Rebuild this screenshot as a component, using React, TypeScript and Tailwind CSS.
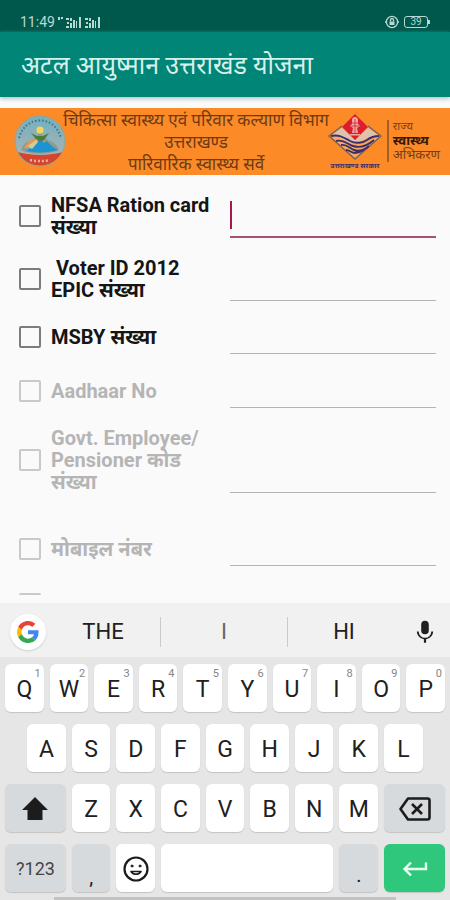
import type { ReactNode } from 'react';

const fontStack =
  "font-[Roboto,'Noto_Sans','Noto_Sans_Devanagari','Lohit_Devanagari',sans-serif]";

type Field = {
  id: string;
  label: string;
  disabled?: boolean;
  focused?: boolean;
  spacing?: string;
};

const fields: Field[] = [
  { id: 'nfsa', label: 'NFSA Ration card\nसंख्या', focused: true },
  { id: 'epic', label: ' Voter ID 2012\nEPIC संख्या' },
  { id: 'msby', label: 'MSBY संख्या' },
  { id: 'aadhaar', label: 'Aadhaar No', disabled: true, spacing: 'mt-px' },
  { id: 'govt', label: 'Govt. Employee/\nPensioner कोड\nसंख्या', disabled: true },
  { id: 'mobile', label: 'मोबाइल नंबर', disabled: true, spacing: 'mt-5' },
];

function StatusBar() {
  return (
    <div className="flex h-8 shrink-0 items-end justify-between bg-[#00584c] px-5 pb-[3px] text-[#b9d8d3]">
      <div className="flex items-center gap-[3px]">
        <span className="text-[14px] leading-[14px]">11:49</span>
        <svg width="44" height="13" viewBox="0 0 44 13" fill="currentColor" aria-hidden="true">
          <path d="M0 1h2v3H0zM3 1h2v2H3zM8 2h3v2H8zM9 6h2v2H9zM8 10h3v2H8zM12 2h2v3h-2zM12 7h2v5h-2zM15 4h2v8h-2zM18 5h1v7h-1zM21 1h2v11h-2z" />
          <path d="M27 2h3v2h-3zM28 6h2v2h-2zM27 10h3v2h-3zM31 2h2v3h-2zM31 7h2v5h-2zM34 4h2v8h-2zM37 5h1v7h-1zM40 1h2v11h-2z" />
        </svg>
      </div>
      <div className="flex items-center gap-[5px]">
        <svg width="14" height="14" viewBox="0 0 14 14" fill="none" stroke="currentColor" strokeWidth="1.3" aria-hidden="true">
          <circle cx="7" cy="7" r="5.6" />
          <path d="M5.5 6.5V5a1.5 1.5 0 0 1 3 0v1.5" />
          <path d="M4.5 6.5h5V10h-5z" fill="currentColor" stroke="none" />
          <path d="M0 7h1M13 7h1" />
        </svg>
        <div className="flex items-center">
          <span className="flex h-3 w-6 items-center justify-center rounded-[3px] border border-current text-[10px] leading-none">
            39
          </span>
          <span className="h-1 w-[2px] bg-current" />
        </div>
      </div>
    </div>
  );
}

function HealthEmblem() {
  return (
    <svg className="shrink-0" width="52" height="52" viewBox="0 0 52 52" aria-hidden="true">
      <defs>
        <clipPath id="seal">
          <circle cx="26" cy="26" r="25" />
        </clipPath>
        <linearGradient id="sky" x1="0" y1="0" x2="0" y2="1">
          <stop offset="0" stopColor="#6fb0c4" />
          <stop offset="1" stopColor="#b9b3ac" />
        </linearGradient>
      </defs>
      <g clipPath="url(#seal)">
        <rect width="52" height="52" fill="url(#sky)" />
        <path d="M0 36c9 3 17 4 26 4s18-1 26-4v16H0z" fill="#d5442c" />
      </g>
      <path d="M7 35c2-6 6-9 10-9l9-8 9 8c4 0 8 4 10 9-11 5-27 5-38 0z" fill="#8d9c92" />
      <path d="M10 33c4-7 9-10 16-10l-6 10z" fill="#e39a52" />
      <path d="M12 36c6-3 10-7 14-13l4 5 3-2c3 4 7 7 11 9-10 3-22 3-32 1z" fill="#1c94d2" />
      <path d="m17 18 6 3h6l6-3-5 7-4 1-4-2z" fill="#4f7a38" />
      <path d="m14 31 8-6 2 2-6 7z" fill="#d8c99a" />
      <circle cx="26" cy="15" r="3.6" fill="#f0d85a" />
      <path d="M5 23C8 12 16 5.500 26 5.500S44 12 47 23" fill="none" stroke="#4b6e7c" strokeWidth="2" strokeDasharray="1.500 2" />
      <path d="M16 45c7 1.500 13 1.500 20 0" fill="none" stroke="#f5b29a" strokeWidth="2.500" strokeDasharray="2 2" />
      <circle cx="26" cy="26" r="25" fill="none" stroke="#8ba7a0" strokeWidth="1" />
    </svg>
  );
}

function StateEmblem() {
  return (
    <svg width="54" height="47" viewBox="0 0 54 47" aria-hidden="true">
      <path d="M14 13 1 22l26 23 26-23-13-9z" fill="#f9a65e" />
      <path d="M14 12 1 22l26 23 26-23-13-10" fill="none" stroke="#75605f" strokeWidth="1.400" />
      <path d="m3 22 11-8 13 12 13-12 11 8-10 1-8 4-12 2-10-6z" fill="#dfc2ae" />
      <path d="M3 22c9-2 13 2 19 5s13 2 17-1 8-4 12-4M8 27c8-2 11 3 17 5s14 0 21-6M13 31c6-1 8 3 13 5s10 0 15-4M18 36c4 0 5 3 9 3s6-1 9-3" fill="none" stroke="#3c2e68" strokeWidth="1.900" />
      <path d="m27 0 13 13-13 13-13-13z" fill="#d91f2d" />
      <path d="M24 6c0-4 6-4 6 0v4l2 2-3 2 1 5h-6l1-5-3-2 2-2zM22 20h10v1.500H22z" fill="#f3a9a4" />
      <path d="M27 5v15M24 9h6M23 12h8" fill="none" stroke="#d91f2d" strokeWidth=".8" />
    </svg>
  );
}

function Banner() {
  return (
    <section className="relative mt-[11px] h-[67px] shrink-0 bg-[#fc8a27]">
      <h2 className="mr-[58px] pt-px text-center text-[17px] leading-[22px] font-normal whitespace-nowrap text-[#6d3a14]">
        चिकित्सा स्वास्थ्य एवं परिवार कल्याण विभाग
        <br />
        उत्तराखण्ड
        <br />
        पारिवारिक स्वास्थ्य सर्वे
      </h2>
      <div className="absolute top-[7px] left-[14px]">
        <HealthEmblem />
      </div>
      <div className="absolute top-[6px] right-[10px] flex gap-[5px]">
        <div className="flex flex-col items-center">
          <StateEmblem />
          <span className="text-[7px] leading-[11px] font-bold whitespace-nowrap text-[#3e2f6c]">
            उत्तराखण्ड सरकार
          </span>
        </div>
        <div className="flex h-[53px] flex-col justify-center whitespace-nowrap text-[#74401c]">
          <div className="flex flex-col border-l-2 border-[#a0612a] pl-1">
            <span className="text-[11px] leading-[14px]">राज्य</span>
            <span className="text-[13px] leading-[14px] font-bold text-[#32190b]">स्वास्थ्य</span>
            <span className="text-[13px] leading-[14px]">अभिकरण</span>
          </div>
        </div>
      </div>
    </section>
  );
}

function FieldRow({ field }: { field: Field }) {
  const box = field.disabled ? 'border-[#c9c9c9]' : 'border-[#7c7c7c]';
  const text = field.disabled ? 'text-[#b5b5b5]' : 'text-[#151515]';
  const line = field.focused
    ? 'border-b-2 border-[#a85070]'
    : 'border-b border-[#b4b4b4]';
  return (
    <div className={`grid min-h-[34px] shrink-0 grid-cols-[211fr_206fr] ${field.spacing ?? ''}`}>
      <div className="flex items-center gap-[10px]">
        <input
          type="checkbox"
          id={field.id}
          disabled={field.disabled}
          className={`size-[22px] shrink-0 appearance-none rounded-[2px] border-2 ${box}`}
        />
        <label
          htmlFor={field.id}
          className={`text-[20px] leading-[22px] font-bold whitespace-pre ${text}`}
        >
          {field.label}
        </label>
      </div>
      <div className="relative flex">
        <input
          type="text"
          aria-label={field.label}
          disabled={field.disabled}
          className={`w-full min-w-0 bg-transparent outline-none ${line}`}
        />
        {field.focused && (
          <span className="absolute top-[7px] left-0 h-[28px] w-[2px] bg-[#a01c50]" />
        )}
      </div>
    </div>
  );
}

function Key({
  children,
  hint,
  label,
  span = 'col-span-2',
  tone = 'bg-white',
}: {
  children?: ReactNode;
  hint?: string;
  label?: string;
  span?: string;
  tone?: string;
}) {
  return (
    <button
      type="button"
      aria-label={label}
      className={`relative mx-[3px] flex h-12 items-center justify-center rounded-[6px] pt-[2px] text-[23px] leading-none text-[#202020] shadow-[0_1px_1px_#c3c3c3] ${span} ${tone}`}
    >
      {children}
      {hint && (
        <span className="absolute top-1 right-[3px] text-[11px] leading-none text-[#858585]">
          {hint}
        </span>
      )}
    </button>
  );
}

function GoogleLogo() {
  return (
    <svg width="22" height="22" viewBox="0 0 48 48" aria-hidden="true">
      <path fill="#EA4335" d="M24 9.500c3.540 0 6.710 1.220 9.210 3.600l6.850-6.850C35.900 2.380 30.470 0 24 0 14.620 0 6.510 5.380 2.560 13.220l7.980 6.190C12.430 13.720 17.740 9.500 24 9.500z" />
      <path fill="#4285F4" d="M46.980 24.550c0-1.570-.15-3.090-.38-4.550H24v9.020h12.940c-.58 2.960-2.260 5.480-4.780 7.180l7.730 6c4.510-4.180 7.090-10.360 7.090-17.650z" />
      <path fill="#FBBC05" d="M10.530 28.590A14.500 14.500 0 0 1 9.770 24c0-1.600.27-3.140.76-4.590l-7.980-6.190A23.900 23.900 0 0 0 0 24c0 3.880.92 7.540 2.560 10.780z" />
      <path fill="#34A853" d="M24 48c6.480 0 11.930-2.130 15.890-5.810l-7.730-6c-2.150 1.450-4.920 2.300-8.160 2.300-6.260 0-11.570-4.220-13.470-9.910l-7.980 6.190C6.510 42.620 14.620 48 24 48z" />
    </svg>
  );
}

function Suggestions() {
  const word = 'h-[30px] text-[22px] leading-[30px]';
  return (
    <div className="flex h-[54px] shrink-0 items-center bg-[#f1f1f1] pt-1 pl-[10px]">
      <button
        type="button"
        aria-label="Google"
        className="flex size-9 shrink-0 items-center justify-center rounded-full bg-white shadow-[0_1px_2px_#cfcfcf]"
      >
        <GoogleLogo />
      </button>
      <div className="grid flex-1 grid-cols-[114fr_128fr_112fr] text-[#202020]">
        <button type="button" className={word}>THE</button>
        <button type="button" className={`${word} border-x border-[#cbcbcb] text-[#666666]`}>I</button>
        <button type="button" className={word}>HI</button>
      </div>
      <button type="button" aria-label="Voice input" className="flex w-[50px] shrink-0 justify-center">
        <svg width="26" height="26" viewBox="0 0 24 24" fill="#202020" aria-hidden="true">
          <path d="M12 14a3.500 3.500 0 0 0 3.500-3.500V5a3.500 3.500 0 0 0-7 0v5.500A3.500 3.500 0 0 0 12 14z" />
          <path d="M17.800 11.500a5.800 5.800 0 0 1-11.600 0H4.500c0 3.600 2.900 6.500 6.500 7.100V22h2v-3.400c3.600-.6 6.500-3.500 6.500-7.100z" />
        </svg>
      </button>
    </div>
  );
}

const special = 'bg-[#d7dadc]';

function Keyboard() {
  return (
    <div className="shrink-0">
      <Suggestions />
      <div className="bg-[#e6e6e6] pt-[7px]">
        <div className="grid grid-cols-[repeat(20,minmax(0,1fr))] gap-y-3 px-[2px]">
          {'QWERTYUIOP'.split('').map((letter, i) => (
            <Key key={letter} hint={String((i + 1) % 10)}>{letter}</Key>
          ))}
          {'ASDFGHJKL'.split('').map((letter) => (
            <Key key={letter} span={letter === 'A' ? 'col-start-2 col-end-4' : 'col-span-2'}>
              {letter}
            </Key>
          ))}
          <Key label="Shift" span="col-start-1 col-end-4" tone={special}>
            <svg width="28" height="24" viewBox="0 0 28 24" fill="#1c1c1c" aria-hidden="true">
              <path d="M14 0 1 13h5.500v10h15V13H27z" />
            </svg>
          </Key>
          {'ZXCVBNM'.split('').map((letter) => (
            <Key key={letter}>{letter}</Key>
          ))}
          <Key label="Backspace" span="col-span-3" tone={special}>
            <svg width="32" height="24" viewBox="0 0 32 24" fill="none" stroke="#1c1c1c" strokeWidth="2.600" strokeLinejoin="round" aria-hidden="true">
              <path d="M9 1.500h19.500a2 2 0 0 1 2 2v17a2 2 0 0 1-2 2H9L1.500 12z" />
              <path d="m13 7 10 10M23 7 13 17" />
            </svg>
          </Key>
          <Key span="col-span-3" tone={special}>
            <span className="text-[18px] text-[#444444]">?123</span>
          </Key>
          <Key tone={special}>
            <span className="pt-4 text-[20px]">,</span>
          </Key>
          <Key label="Emoji">
            <svg width="26" height="26" viewBox="0 0 26 26" fill="none" stroke="#1c1c1c" strokeWidth="2.200" strokeLinecap="round" aria-hidden="true">
              <circle cx="13" cy="13" r="11.500" />
              <path d="M8 15.500c2 3.600 8 3.600 10 0z" strokeWidth="1.600" strokeLinejoin="round" />
              <circle cx="9" cy="10" r="1" fill="#1c1c1c" strokeWidth="1" />
              <circle cx="17" cy="10" r="1" fill="#1c1c1c" strokeWidth="1" />
            </svg>
          </Key>
          <Key label="Space" span="col-span-8" />
          <Key tone={special}>
            <span className="pt-3 text-[20px]">.</span>
          </Key>
          <Key label="Enter" span="col-span-3" tone="bg-[#2fc77b]">
            <svg width="26" height="16" viewBox="0 0 26 16" fill="none" stroke="#e9fff3" strokeWidth="2.400" aria-hidden="true">
              <path d="M24 1.500V8H2.500M9 1.500 2.500 8 9 14.500" />
            </svg>
          </Key>
        </div>
        <div className="mx-[54px] mt-[5px] h-[3px] bg-[#c2c2c2]" />
      </div>
    </div>
  );
}

export default function App() {
  return (
    <div className={`flex h-screen flex-col overflow-hidden bg-[#fafafa] ${fontStack}`}>
      <StatusBar />
      <header className="flex h-[65px] shrink-0 items-center bg-[#008577] px-[21px] pt-[3px] shadow-[0_2px_4px_#b8c4c4]">
        <h1 className="text-[25px] leading-8 font-normal whitespace-nowrap text-[#d8f0ec]">
          अटल आयुष्मान उत्तराखंड योजना
        </h1>
      </header>
      <Banner />
      <form className="mb-2 flex min-h-0 flex-1 flex-col gap-[19px] overflow-hidden pt-[19px] pr-[14px] pl-[19px]">
        {fields.map((field) => (
          <FieldRow key={field.id} field={field} />
        ))}
        <div className="flex h-[38px] shrink-0 items-center">
          <input
            type="checkbox"
            disabled
            aria-label="अन्य"
            className="size-[22px] appearance-none rounded-[2px] border-2 border-[#c9c9c9]"
          />
        </div>
      </form>
      <Keyboard />
    </div>
  );
}
